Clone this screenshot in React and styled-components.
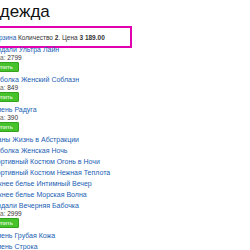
import React from 'react';
import styled, { createGlobalStyle } from 'styled-components';

const GlobalStyle = createGlobalStyle`
  body {
    margin: 0;
    background: #fff;
    font-family: "Liberation Sans", Arial, sans-serif;
    overflow: hidden;
  }
`;

const Page = styled.div`
  margin-left: -12px;
  padding-top: 2px;
  width: 270px;
`;

const Title = styled.h1`
  margin: 0 0 0 -1px;
  font-size: 17px;
  line-height: 20px;
  font-weight: normal;
  color: #111;
`;

const CartBox = styled.div`
  box-sizing: border-box;
  width: 144px;
  height: 22px;
  margin-top: 4px;
  border: 2.5px solid #e000b0;
  padding: 0 1.5px;
  display: flex;
  align-items: center;
  font-size: 6.5px;
  color: #333;
`;

const Link = styled.a`
  color: #2160b3;
  text-decoration: none;
`;

const List = styled.div`
  display: flex;
  flex-direction: column;
  margin-top: -2px;
`;

const Item = styled.div`
  display: flex;
  flex-direction: column;
  align-items: flex-start;
  margin-bottom: 3px;
  font-size: 7px;
`;

const Name = styled(Link)`
  line-height: 8px;
`;

const Price = styled.div`
  line-height: 7px;
  font-size: 6.5px;
  color: #666;

  span {
    color: #333;
  }
`;

const BuyButton = styled.button`
  box-sizing: border-box;
  height: 10px;
  margin: 0.5px 0 1.5px;
  padding: 0 5px;
  border: 1px solid #33a31e;
  border-radius: 1px;
  background: #46c22c;
  color: #fff;
  font-family: inherit;
  font-size: 6px;
  line-height: 8px;
`;

const goods = [
  { name: 'Сандали Ультра Лайн', price: 2799 },
  { name: 'Футболка Женский Соблазн', price: 849 },
  { name: 'Ремень Радуга', price: 390 },
  { name: 'Штаны Жизнь в Абстракции' },
  { name: 'Футболка Женская Ночь' },
  { name: 'Спортивный Костюм Огонь в Ночи' },
  { name: 'Спортивный Костюм Нежная Теплота' },
  { name: 'Нижнее белье Интимный Вечер' },
  { name: 'Нижнее белье Морская Волна' },
  { name: 'Сандали Вечерняя Бабочка', price: 2999 },
  { name: 'Ремень Грубая Кожа' },
  { name: 'Ремень Строка' },
];

export default function App() {
  return (
    <Page>
      <GlobalStyle />
      <Title>Одежда</Title>
      <CartBox>
        <span>
          <Link href="#">Корзина</Link> Количество <b>2</b>. Цена <b>3 189.00</b>
        </span>
      </CartBox>
      <List>
        {goods.map((g) => (
          <Item key={g.name}>
            <Name href="#">{g.name}</Name>
            {g.price && (
              <>
                <Price>Цена: <span>{g.price}</span></Price>
                <BuyButton>Купить</BuyButton>
              </>
            )}
          </Item>
        ))}
      </List>
    </Page>
  );
}
